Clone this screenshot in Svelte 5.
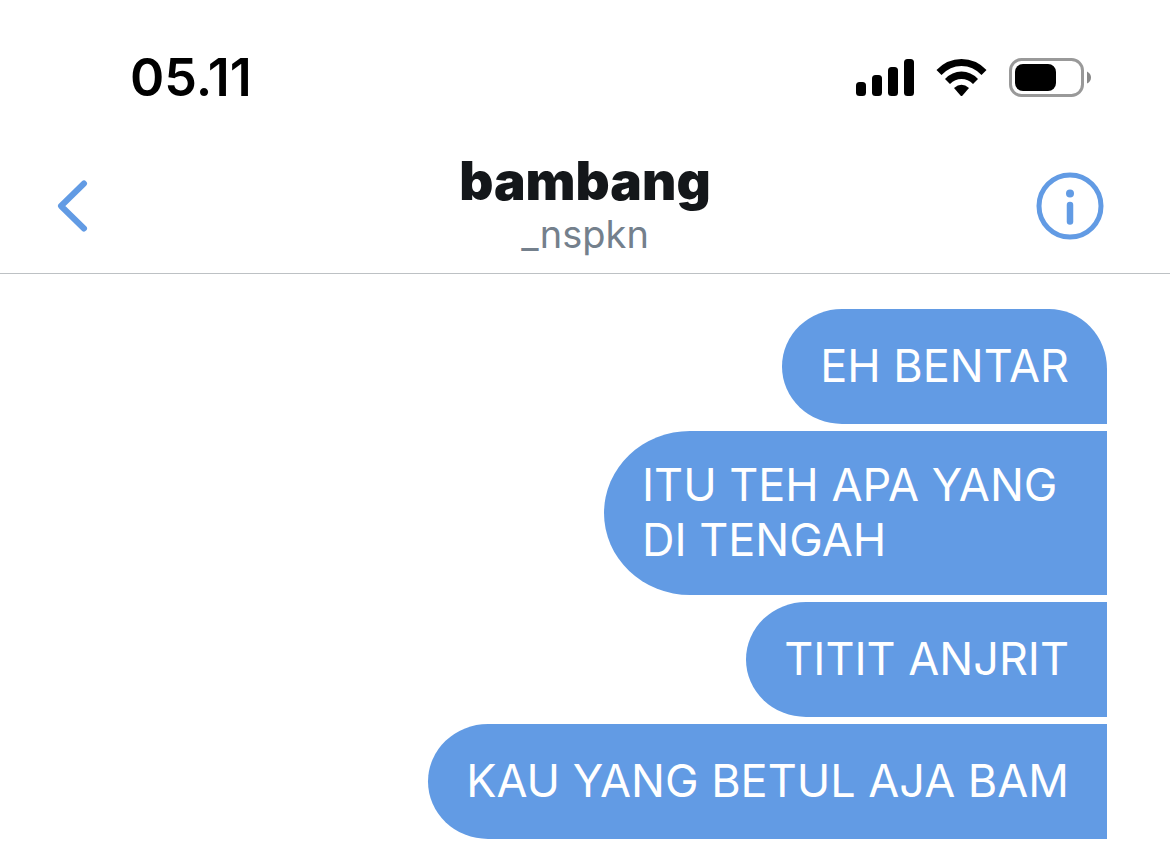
<script>
  const messages = [
    { text: 'EH BENTAR' },
    { text: 'ITU TEH APA YANG DI TENGAH', multiline: true },
    { text: 'TITIT ANJRIT' },
    { text: 'KAU YANG BETUL AJA BAM' },
  ];
</script>

<div class="screen">
  <div class="status">
    <time>05.11</time>
    <div class="indicators">
      <svg width="60" height="40" viewBox="0 0 60 40" role="img" aria-label="Signal">
        <rect x="1" y="24" width="10" height="14" rx="3.5" />
        <rect x="17" y="17" width="10" height="21" rx="3.5" />
        <rect x="33" y="9" width="10" height="29" rx="3.5" />
        <rect x="49" y="1" width="10" height="37" rx="3.5" />
      </svg>
      <svg width="52" height="40" viewBox="0 0 52 40" role="img" aria-label="Wi-Fi">
        <path d="M.5 12Q11 1 25.5 1T50.500 12L45.5 17Q37 8 25.5 8T5.5 17Z" />
        <path d="M9 21Q16 13.5 25.5 13.5T42 21L37 26Q32 21 25.5 21T14 26Z" />
        <path d="M18 30Q25.5 23.5 33 30L26.5 37.5Q25.5 38.5 24.5 37.5Z" />
      </svg>
      <svg width="82" height="40" viewBox="0 0 82 40" role="img" aria-label="Battery">
        <rect x="1.5" y="1.5" width="72" height="36" rx="11" fill="none" stroke="#999" stroke-width="3" />
        <rect x="6" y="6" width="41" height="27" rx="8" />
        <path d="M78 13.5q4 2 4 6t-4 6z" fill="#888" />
      </svg>
    </div>
  </div>

  <header>
    <button class="back" aria-label="Back">
      <svg width="32" height="54" viewBox="0 0 32 54"><path d="M28 4.5 5 27 28 49.5" fill="none" stroke="currentColor" stroke-width="6" stroke-linecap="round" stroke-linejoin="round" /></svg>
    </button>
    <div class="title">
      <h1>bambang</h1>
      <p>_nspkn</p>
    </div>
    <button class="info" aria-label="Conversation info">
      <svg width="68" height="68" viewBox="0 0 68 68"><circle cx="34" cy="34" r="31" fill="none" stroke="currentColor" stroke-width="5" /><circle cx="34" cy="21.5" r="4" fill="currentColor" /><path d="M34 33v16.5" stroke="currentColor" stroke-width="6.5" stroke-linecap="round" /></svg>
    </button>
  </header>

  <main>
    {#each messages as message}
      <p class="bubble" class:multiline={message.multiline}>{message.text}</p>
    {/each}
  </main>
</div>

<style>
  :global(body) { margin: 0; background: #fff; }
  .screen { font-family: Inter, sans-serif; }
  .status {
    display: flex; align-items: center; justify-content: space-between;
    padding: 48px 79px 0 130px;
  }
  time { font-size: 52px; line-height: 60px; font-weight: 600; color: #000; }
  .indicators { display: flex; align-items: center; gap: 21px; }
  svg { display: block; }
  header {
    display: grid; grid-template-columns: 1fr auto 1fr; align-items: center;
    padding: 46px 56px 16px; border-bottom: 1px solid #bdc1c4;
  }
  button { border: 0; padding: 0; background: none; color: #629be4; cursor: pointer; }
  .back { justify-self: start; }
  .info { justify-self: end; margin-right: 10px; }
  .title { display: grid; gap: 3px; text-align: center; }
  h1 { margin: 0; font-size: 53px; line-height: 55px; font-weight: 900; color: #14171a; }
  .title p { margin: 0; font-size: 38px; line-height: 45px; color: #74808c; }
  main {
    display: flex; flex-direction: column; align-items: flex-end; gap: 7px;
    padding: 35px 63px 5px;
  }
  .bubble {
    --curve: 60px;
    display: flex; align-items: center; box-sizing: border-box;
    min-height: 115px; margin: 0; padding: 26px 38px 28px;
    font-size: 45px; line-height: 55px; color: #fff; background: #629be4;
    border-radius: var(--curve) 0 0 var(--curve) / 50% 0 0 50%;
  }
  .bubble:first-child { border-radius: 60px 58px 0 60px / 50% 60px 0 50%; }
  .multiline { --curve: 86px; width: 503px; }
</style>
